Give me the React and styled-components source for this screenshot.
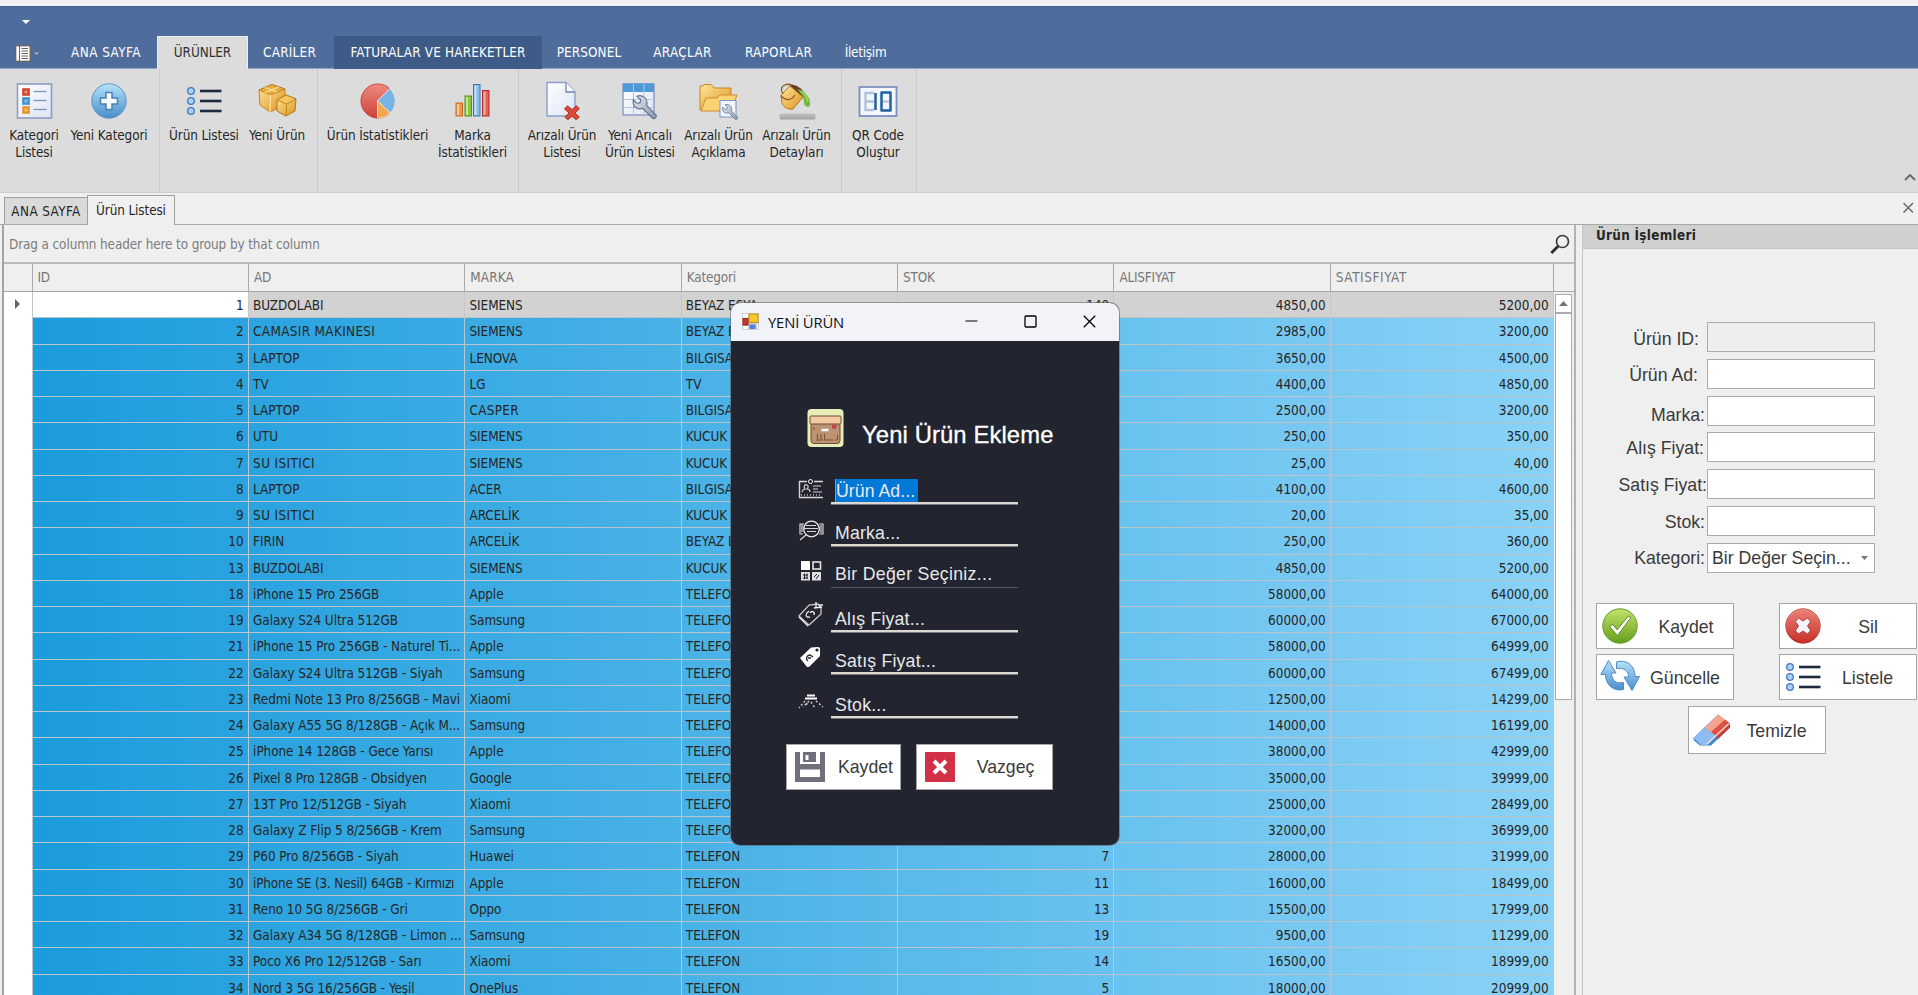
import React from "react";
import styled, { createGlobalStyle, css } from "styled-components";

const GlobalStyle = createGlobalStyle`
  * { box-sizing: border-box; }
  html, body { margin: 0; padding: 0; }
  body {
    width: 1918px;
    height: 995px;
    overflow: hidden;
    background: #efefef;
    color: #262626;
    font-family: "DejaVu Sans Condensed", "DejaVu Sans", sans-serif;
    font-stretch: condensed;
    font-size: 13.4px;
    letter-spacing: -0.1px;
  }
`;

const uiFont = css`
  font-family: "Liberation Sans", Arial, sans-serif;
  font-stretch: normal;
  font-size: 17.7px;
  letter-spacing: 0;
`;

const Screen = styled.div`
  position: relative;
  width: 1918px;
  height: 995px;
  overflow: hidden;
  display: flex;
  flex-direction: column;
`;

/* ---------- header and ribbon ---------- */
const TopStrip = styled.div`
  flex: none;
  height: 6px;
  background: #f2f2f2;
`;
const TitleBar = styled.header`
  flex: none;
  height: 30px;
  padding: 13px 0 0 22px;
  background: #4f6d9c;
  border-top: 1px solid #44628f;
  svg { display: block; }
`;
const RibbonTabs = styled.nav`
  flex: none;
  height: 33px;
  display: flex;
  background: #4f6d9c;
  border-bottom: 1px solid #93a5c3;
`;
const AppMenu = styled.div`
  width: 55px;
  padding: 9px 0 0 15px;
`;
const RibbonTab = styled.div`
  width: ${(p) => p.$w}px;
  height: 33px;
  margin-left: ${(p) => p.$ml || 0}px;
  line-height: ${(p) => (p.$active ? 32 : 34)}px;
  text-align: center;
  white-space: nowrap;
  letter-spacing: ${(p) => p.$ls ?? -0.1}px;
  color: ${(p) => (p.$active ? "#303030" : "#fff")};
  background: ${(p) => (p.$active ? "#dcdcdc" : p.$hover ? "#3e5a86" : "transparent")};
  border: ${(p) => (p.$active ? "1px solid #eee" : "0")};
  border-bottom: 0;
`;
const Ribbon = styled.div`
  flex: none;
  height: 124px;
  display: flex;
  background: #dcdcdc;
  border-bottom: 1px solid #cfcfcf;
`;
const RibbonGroup = styled.div`
  display: flex;
  width: ${(p) => p.$w}px;
  padding-left: ${(p) => p.$pl || 0}px;
  border-right: 1px solid #c9c9c9;
`;
const RibbonItem = styled.div`
  width: ${(p) => p.$w}px;
  display: flex;
  flex-direction: column;
  align-items: center;
  padding-top: 12px;
  line-height: 16.5px;
  text-align: center;
  white-space: pre;
  svg { display: block; margin-bottom: 7px; }
`;
const RibbonEnd = styled.div`
  flex: 1;
  display: flex;
  justify-content: flex-end;
  align-items: flex-end;
  padding: 0 2px 10px 0;
`;

/* ---------- document tabs ---------- */
const DocTabs = styled.div`
  flex: none;
  height: 32px;
  display: flex;
  align-items: flex-end;
  padding-left: 4px;
  background: #f0f0f0;
  border-bottom: 1px solid #a9a9a9;
`;
const DocTab = styled.div`
  width: ${(p) => p.$w}px;
  height: ${(p) => (p.$active ? 30 : 27)}px;
  margin-bottom: ${(p) => (p.$active ? -1 : 0)}px;
  line-height: ${(p) => (p.$active ? 29 : 28)}px;
  text-align: center;
  white-space: nowrap;
  letter-spacing: ${(p) => p.$ls ?? -0.1}px;
  background: ${(p) => (p.$active ? "#f0f0f0" : "#dadada")};
  border: 1px solid #a0a0a0;
  border-bottom: 0;
  border-right-width: ${(p) => (p.$active ? 1 : 0)}px;
`;
const CloseSlot = styled.div`
  margin-left: auto;
  padding: 0 3px 4px 0;
`;

/* ---------- grid ---------- */
const Main = styled.main`
  flex: 1;
  min-height: 0;
  display: flex;
  padding-left: 2px;
`;
const GridPanel = styled.section`
  width: 1574px;
  border-left: 2px solid #a3a3a3;
  border-right: 2px solid #b2b2b2;
  display: flex;
  flex-direction: column;
  overflow: hidden;
`;
const GroupPanel = styled.div`
  flex: none;
  height: 39px;
  display: flex;
  justify-content: space-between;
  align-items: center;
  padding: 1px 4px 0 5px;
  color: #7c7c7c;
  letter-spacing: -0.1px;
  border-bottom: 2px solid #bababa;
`;
const HeaderRow = styled.div`
  flex: none;
  height: 28px;
  display: grid;
  grid-template-columns: 28.5px repeat(6, 216.4px) 223px 1fr;
  border-bottom: 1px solid #a6a6a6;
  color: #777;
`;
const HeaderCell = styled.div`
  padding-left: 5px;
  line-height: 27px;
  border-right: 1px solid #a9a9a9;
  letter-spacing: ${(p) => p.$ls ?? -0.2}px;
  &:last-child { border-right: 0; }
`;
const GridBody = styled.div`
  flex: 1;
  min-height: 0;
  display: flex;
`;
const Rows = styled.div`
  width: 1550px;
`;
const Row = styled.div`
  height: 26.25px;
  display: flex;
`;
const Indicator = styled.div`
  width: 28.5px;
  padding: 7px 0 0 11px;
  background: #fff;
  border-right: 1px solid #bcc6cc;
  svg { display: block; }
`;
const Cells = styled.div`
  display: grid;
  grid-template-columns: repeat(6, 216.4px) 223px;
  border-bottom: 1px solid #bcc4ca;
  background: ${(p) =>
    p.$focused ? "#d2d2d2" : "linear-gradient(90deg, #1b9cdc 0%, #50b5e8 50%, #8ad2f7 100%)"};
`;
const Cell = styled.div`
  padding: 0 4.2px 0 4.2px;
  line-height: 27.4px;
  overflow: hidden;
  white-space: nowrap;
  text-align: ${(p) => (p.$num ? "right" : "left")};
  letter-spacing: ${(p) => p.$ls}px;
  background: ${(p) => (p.$white ? "#fff" : "transparent")};
  border-right: 1px solid ${(p) => (p.$focused ? "#c8c8c8" : "#b4c8d4")};
`;
const ScrollTrack = styled.div`
  width: 20px;
  padding: 2px 2px 0 1px;
`;
const ScrollUp = styled.div`
  height: 19px;
  display: flex;
  justify-content: center;
  align-items: center;
  background: #fff;
  border: 1px solid #ababab;
`;
const ScrollThumb = styled.div`
  height: 387px;
  margin-top: 0;
  background: #fff;
  border: 1px solid #ababab;
`;

/* ---------- side panel ---------- */
const SidePanel = styled.aside`
  flex: 1;
  margin-left: 6px;
  border-left: 1px solid #c4c4c4;
  display: flex;
  flex-direction: column;
`;
const SideTitle = styled.div`
  height: 24px;
  padding-left: 13px;
  line-height: 21px;
  font-weight: bold;
  letter-spacing: 0.3px;
  background: #d0d0d0;
  border-bottom: 1px solid #c6c6c6;
`;
const Form = styled.div`
  padding-top: 73px;
  ${uiFont}
  color: #3a3a3a;
`;
const FormRow = styled.div`
  display: flex;
  height: 36.75px;
`;
const FormLabel = styled.label`
  width: 124px;
  padding-right: ${(p) => p.$pr}px;
  padding-top: ${(p) => p.$pt}px;
  line-height: 20px;
  text-align: right;
  white-space: nowrap;
`;
const FormBox = styled.div`
  width: 168px;
  height: 30px;
  display: flex;
  justify-content: space-between;
  align-items: center;
  padding: 2px 5px 0 4px;
  white-space: nowrap;
  background: ${(p) => (p.$disabled ? "#eee" : "#fff")};
  border: 1px solid #acacac;
`;
const ButtonGrid = styled.div`
  display: grid;
  grid-template-columns: 138px 138px;
  column-gap: 44.5px;
  row-gap: 5px;
  padding: 24px 0 0 13px;
`;
const LastButton = styled.div`
  padding: 6px 0 0 105px;
`;
const ActionButton = styled.div`
  ${uiFont}
  color: #3a3a3a;
  width: ${(p) => p.$w || 138}px;
  height: ${(p) => p.$h || 46}px;
  display: flex;
  align-items: center;
  background: #fff;
  border: 1px solid #a4a4a4;
  padding-left: ${(p) => p.$pl}px;
  svg { flex: none; display: block; }
  span { flex: 1; text-align: center; padding-left: ${(p) => p.$tl || 0}px; padding-right: ${(p) => p.$tr || 0}px; padding-top: 2px; }
`;

/* ---------- dialog ---------- */
const Dialog = styled.div`
  position: absolute;
  left: 731px;
  top: 303px;
  width: 388px;
  height: 542px;
  border-radius: 9px;
  overflow: hidden;
  background: #222430;
  box-shadow: 0 0 0 1px rgba(90, 90, 100, 0.55);
  color: #e8e8ea;
  ${uiFont}
`;
const DialogBar = styled.div`
  height: 38px;
  display: flex;
  align-items: center;
  padding: 0 0 1px 11px;
  background: #f2f3f8;
  color: #111;
  font-family: "Open Sans", "Noto Sans", sans-serif;
  font-size: 14.8px;
  letter-spacing: -0.15px;
  svg { display: block; }
`;
const DialogName = styled.div`
  flex: 1;
  padding-left: 9px;
`;
const WindowButtons = styled.div`
  display: flex;
  gap: 46px;
  padding-right: 23px;
`;
const DialogHead = styled.div`
  display: flex;
  padding: 68px 0 0 76px;
  svg { display: block; }
`;
const DialogTitle = styled.div`
  padding: 12px 0 0 18px;
  line-height: 28px;
  font-size: 23.8px;
  letter-spacing: 0.12px;
  color: #fff;
  white-space: nowrap;
  -webkit-text-stroke: 0.3px #fff;
`;
const Field = styled.div`
  display: flex;
  align-items: flex-end;
  height: ${(p) => p.$h}px;
  padding-left: 66px;
`;
const FieldIcon = styled.div`
  width: 34px;
  padding-bottom: ${(p) => p.$pb}px;
  svg { display: block; }
`;
const FieldInput = styled.div`
  width: 187px;
  padding-left: 4px;
  padding-bottom: ${(p) => p.$pb || 0}px;
  line-height: ${(p) => p.$lh}px;
  letter-spacing: ${(p) => p.$ls ?? 0.2}px;
  white-space: nowrap;
  border-bottom: ${(p) => (p.$thin ? "1px solid #55565c" : "2px solid #dcd8d4")};
  box-shadow: ${(p) => (p.$thin ? "none" : "0 1px 0 #77787c")};
`;
const Selected = styled.span`
  display: block;
  width: 82.5px;
  padding-top: 1px;
  background: #0078d7;
  border-left: 1px solid #e08040;
`;
const DialogButtons = styled.div`
  display: flex;
  gap: 15px;
  padding: 26px 0 0 55px;
`;

/* ---------- icons ---------- */
const Gradients = () => (
  <svg width="0" height="0" style={{ display: "block" }}>
    <defs>
      <linearGradient id="blue" x1="0" y1="0" x2="0" y2="1">
        <stop offset="0" stopColor="#b4e2fa" /><stop offset="1" stopColor="#4a8ecb" />
      </linearGradient>
      <linearGradient id="red" x1="0" y1="0" x2="0" y2="1">
        <stop offset="0" stopColor="#f4a79e" /><stop offset="1" stopColor="#b91f1c" />
      </linearGradient>
      <linearGradient id="green" x1="0" y1="0" x2="0" y2="1">
        <stop offset="0" stopColor="#c2e36a" /><stop offset="1" stopColor="#659e1c" />
      </linearGradient>
      <linearGradient id="gold" x1="0" y1="0" x2="1" y2="1">
        <stop offset="0" stopColor="#ffe79a" /><stop offset="1" stopColor="#dd921f" />
      </linearGradient>
      <linearGradient id="paper" x1="0" y1="0" x2="1" y2="1">
        <stop offset="0" stopColor="#ffffff" /><stop offset="1" stopColor="#dce4f3" />
      </linearGradient>
      <linearGradient id="steel" x1="0" y1="0" x2="1" y2="1">
        <stop offset="0" stopColor="#e5ebf3" /><stop offset="1" stopColor="#8697b0" />
      </linearGradient>
      <linearGradient id="shade" x1="0" y1="0" x2="0" y2="1">
        <stop offset="0" stopColor="#c2c2c2" /><stop offset="1" stopColor="#a2a2a2" />
      </linearGradient>
    </defs>
  </svg>
);
const Svg = ({ w = 40, h = 40, children }) => (
  <svg width={w} height={h} viewBox={`0 0 ${w} ${h}`} fill="none">{children}</svg>
);
const Wrench = ({ t }) => (
  <path
    transform={t}
    d="M3 1.2 6.800 4.600 5.800 8 2.200 7.800-.6 4.600C-1.400 9-.2 12.400 4 13.600c1.700.4 3.300.2 4.600-.3L18.400 23c1.600 1.500 4.800-.6 3.600-3L12.600 10.400c1-4-.6-7.600-3.600-8.900C7.200.6 5 .4 3 1.200Z"
    fill="url(#steel)" stroke="#66758f" strokeWidth="1.2"
  />
);
const CategoryIcon = () => (
  <Svg>
    <rect x="3.500" y="3" width="34" height="34" fill="url(#paper)" stroke="#8e9cc5" strokeWidth="1.600" />
    {[["#d4422f", 7.5], ["#3f8ed0", 16.5], ["#e8902c", 25.5]].map(([c, y]) => (
      <g key={y}>
        <rect x="8.500" y={y} width="7" height="7" fill={c} stroke={c} strokeOpacity=".6" />
        <rect x="10.500" y={y + 2} width="3" height="3" fill="#fff" fillOpacity=".4" />
        <path d={`M19.500 ${y + 3}h13`} stroke="#7b92c0" strokeWidth="1.300" />
      </g>
    ))}
  </Svg>
);
const AddIcon = () => (
  <Svg>
    <circle cx="20" cy="20" r="17.200" fill="url(#blue)" stroke="#5f93c8" />
    <path d="M17 11.500h6V17h5.500v6H23v5.500h-6V23h-5.500v-6H17Z" fill="#f4f9ff" stroke="#4b80b8" strokeWidth="1.500" />
  </Svg>
);
const ListIcon = () => (
  <Svg>
    {[10, 20, 30].map((y) => (
      <g key={y}>
        <circle cx="7" cy={y} r="3.300" fill="#a5d2f5" stroke="#4377bf" strokeWidth="1.300" />
        <path d={`M16 ${y}h21.500`} stroke="#1d2b3f" strokeWidth="2.600" />
      </g>
    ))}
  </Svg>
);
const BoxesIcon = () => (
  <Svg>
    <path d="M2 9 15 3.500 28 8v9l-2 8-13 6L3 24Z" fill="url(#gold)" stroke="#c18426" />
    <path d="M2 9l11.500 5L28 8 15 3.500Z" fill="#e8ab42" stroke="#b1761c" strokeWidth=".8" />
    <path d="M13.500 14 13 31M8 6.500 20 11M22 6 8 11.500" stroke="#fbe6a0" strokeWidth="1.200" />
    <path d="M20 19l9-5 10 4-1 12-9 5-9-5Z" fill="url(#gold)" stroke="#b1761c" />
    <path d="M20 19l9-5 10 4-9.500 5Z" fill="#f6c65c" stroke="#b1761c" strokeWidth=".8" />
    <path d="M29.500 23 29 35" stroke="#c1841f" />
  </Svg>
);
const PieIcon = () => (
  <Svg>
    <circle cx="20" cy="20" r="17.200" fill="url(#red)" />
    <circle cx="20" cy="20" r="17" fill="#e66a5b" fillOpacity=".45" stroke="#c94b42" />
    <path d="M19.500 20 32 7.500A17.500 17.500 0 0 1 32.500 32Z" fill="#79b3e3" stroke="#e6eff7" />
    <path d="M19.500 20 32 32a17 17 0 0 1-12.500 5Z" fill="#f1a64f" stroke="#f8d8ac" />
  </Svg>
);
const BarsIcon = () => (
  <Svg>
    {[[3, 22, "#ec9a4c", "#c5661c"], [12, 15, "#8cc63f", "#55911a"], [20.5, 3.5, "#87bde9", "#3c76b5"], [29.5, 9.5, "#e36257", "#b12a25"]].map(([x, y, f, s]) => (
      <g key={x}>
        <rect x={x} y={y} width="6.500" height={35 - y} fill={f} stroke={s} />
        <rect x={x + 1} y={y + 1} width="2" height={33 - y} fill="#fff" fillOpacity=".5" />
      </g>
    ))}
  </Svg>
);
const FileDeleteIcon = () => (
  <Svg>
    <path d="M5 1.500h19l9 9.500V35H5Z" fill="url(#paper)" stroke="#8a9fc9" strokeWidth="1.400" />
    <path d="M24 1.500V11h9" fill="#fff" stroke="#6d84b3" strokeWidth="1.300" />
    <path d="m22.500 28 3-3.200 4.500 3.700 4.500-3.700 2.800 3L33 32l4.300 4-3 2.800-4.500-3.600-4 3.600-3-2.800L27 32Z" fill="#dc4a3c" stroke="#b02c23" />
  </Svg>
);
const TableIcon = () => (
  <Svg>
    <rect x="3" y="3" width="31" height="31" fill="url(#paper)" stroke="#8698c4" strokeWidth="1.400" />
    <rect x="3" y="2.500" width="31" height="8.500" fill="#4d9ad6" />
    <path d="M13.500 3v31M24 3v31M3 18.500h31M3 26.500h31" stroke="#b8c5df" />
    <Wrench t="translate(14 14)" />
  </Svg>
);
const FolderIcon = () => (
  <Svg>
    <path d="M1 5h3l1-1.500h7L15 7h17v22H1Z" fill="url(#gold)" stroke="#c3842b" />
    <path d="M7 17h11l3-3h17l-6 16H2Z" fill="#fbd274" stroke="#cf8e2f" />
    <rect x="21" y="19.500" width="16" height="16.500" fill="#f0f4fb" stroke="#7d94c4" />
    <Wrench t="translate(24 23) scale(.66)" />
  </Svg>
);
const PaintIcon = () => (
  <Svg>
    <rect x="2.500" y="32.500" width="36" height="6" rx="1.500" fill="url(#shade)" />
    <path d="M4 14 13 5l13 11-10 12c-5 1-10-2-11-6Z" fill="url(#gold)" stroke="#b87820" />
    <path d="M6 13C0 4 12 0 19 7M4 15c5 5 10 5 14-1" stroke="#8d5a2a" strokeWidth="1.300" />
    <path d="M13 4.500c4-2 11 2 14 7l-1 4.500Z" fill="#6a3a22" />
    <path d="M20 8c8 1 14 9 13 17-3 2-6 0-6-4 0-5-3-8-7-13Z" fill="#6fb935" />
    <path d="M23 10c5 2 7 6 8 11" stroke="#a9db78" strokeWidth="1.300" />
  </Svg>
);
const DigitsIcon = () => (
  <Svg>
    <rect x="1.500" y="6" width="37" height="29" fill="#f3f6fc" stroke="#7b8fbf" strokeWidth="1.800" />
    <path d="M16 12H7.500v17H16M8.500 20.500H16" stroke="#b3c1de" strokeWidth="2.400" />
    <path d="M24 20.500h7" stroke="#b3c1de" strokeWidth="2.200" />
    <path d="M17.500 12v17M23.500 11.500H32.500v18h-9Z" stroke="#225f9e" strokeWidth="2.500" strokeLinejoin="round" />
  </Svg>
);
const AppMenuIcon = () => (
  <Svg w={26} h={18}>
    <rect x=".7" y=".7" width="14.500" height="15.600" fill="#fff" stroke="#66615c" strokeWidth="1.300" />
    <path d="M4.500 1v15" stroke="#66615c" />
    <path d="M6.500 3.500h6.500M6.500 6h6.500M6.500 8.500h6.500M6.500 11h6.500M6.500 13.500h6.500" stroke="#66615c" />
    <path d="M19 7.500h5l-2.500 2.500Z" fill="#b9b3aa" />
  </Svg>
);
const SaveOkIcon = () => (
  <Svg>
    <circle cx="20" cy="20" r="17.200" fill="url(#green)" stroke="#659b2a" />
    <path d="m9.500 20.500 3.300-2 4.200 5.300L28.500 10l2.500 1.500L17.500 29.500Z" fill="#fff" stroke="#5a8c1e" />
  </Svg>
);
const DeleteIcon = () => (
  <Svg>
    <circle cx="20" cy="20" r="17.200" fill="url(#red)" stroke="#c04840" />
    <circle cx="20" cy="20" r="16" fill="#dc4a3c" fillOpacity=".4" />
    <path d="m12.500 15.500 3-3.500 4.500 3 4.500-3 3 3.500-3 4.500 3 4.500-3 3.500-4.500-3-4.500 3-3-3.500 3-4.500Z" fill="#f4f4fa" stroke="#b13028" strokeWidth=".8" />
  </Svg>
);
const RefreshIcon = () => (
  <Svg>
    <path d="M8.500 3.500 16 16h-4.500c0 8 5 11 12 9.500v7C14 35 5.500 28 5.500 17.500H.8Z" fill="url(#blue)" stroke="#4f8cc8" />
    <path d="M32 33.500 24 20h4.500c0-6-4-9.500-12-8.500V5C26 2 35 8 35 19.500h4.500Z" fill="url(#blue)" stroke="#4f8cc8" />
  </Svg>
);
const EraserIcon = () => (
  <Svg>
    <path d="M1.500 28 26 4.500l12 9v4L19 35.500H8l-6-5Z" fill="#3f84cf" />
    <path d="M1.500 28 12.500 18l12 8-9 9H9Z" fill="#8dbdf0" />
    <path d="M12.500 18 26 4.500l12 9L24.500 26Z" fill="#f3a58e" />
    <path d="m24.500 26 13.500-12.500v4L25.500 29.500Z" fill="#cf3b2c" />
    <path d="M19 22 33 9.500l5 4L24.500 26Z" fill="#dd5242" />
    <path d="M15 34 37 13.500" stroke="#f4dbd6" strokeWidth="1.400" />
  </Svg>
);
const SearchIcon = () => (
  <Svg w={20} h={20}>
    <circle cx="12.500" cy="7.500" r="6" stroke="#3c3c3c" strokeWidth="1.700" />
    <path d="m8.300 12-7 7" stroke="#2c2c2c" strokeWidth="2.800" />
  </Svg>
);
const FormIcon = () => (
  <Svg w={17} h={17}>
    <rect width="17" height="17" fill="#cdcdcd" />
    <path d="M1 1h5v4H1zM1 13h5v3H1zM15 11h1v5h-1z" fill="#fff" />
    <rect x="7" y="1" width="9" height="8.500" fill="#f6c72c" stroke="#c79312" />
    <rect x="1" y="5.500" width="5" height="6.500" fill="#c63a2e" stroke="#99221a" />
    <rect x="7.500" y="11.500" width="6" height="4.500" fill="#4f82e2" />
  </Svg>
);
const ParcelIcon = () => (
  <Svg w={37} h={38}>
    <rect x=".5" width="36" height="38" rx="4" fill="#e6eeb5" />
    <rect x="4" y="12" width="29" height="22.500" rx="3" fill="#bd9270" stroke="#6f4d39" />
    <rect x="3" y="7" width="31" height="8" rx="1" fill="#f4cba1" stroke="#6f4d39" />
    <path d="M14.500 21h7" stroke="#fff" strokeWidth="2.400" />
    <path d="M25 16h4.500v3.500H25Z" fill="#c43b4c" />
    <path d="M10.500 25v5M14 25v5M9 31h7" stroke="#6f4d39" strokeWidth="1.100" />
    <path d="M17.500 24.500v6.500H26M30.500 26v5h-2.500M7 18v3" stroke="#6f4d39" strokeWidth=".9" />
  </Svg>
);
const BadgeIcon = () => (
  <Svg w={28} h={20}>
    <path d="M10 2.500H2.500v16H26M17 2.500h9" stroke="#d8d8da" strokeWidth="1.400" />
    <circle cx="13.500" cy="2.500" r="2" stroke="#fff" />
    <path d="M5 13c1-3 2-3 3-3-2-3 0-5 2-4s1 3 0 4c2 0 3 1 3 3M16 7h8M16 10h5M16 13h9" stroke="#d0d0d4" strokeWidth="1.200" />
    <path d="M4 16h21" stroke="#fff" strokeDasharray="1 2" />
  </Svg>
);
const BrandIcon = () => (
  <Svg w={28} h={22}>
    <circle cx="14.500" cy="10" r="7.800" stroke="#ededf0" strokeWidth="1.300" />
    <path d="M7 5H3v10h3M22 5h4v10h-4M9 6.500h10M7 9.500h14M10 12.500h9M9 16l-6 5M5 5v8M24 6v8" stroke="#d6d6d9" strokeWidth="1.200" />
  </Svg>
);
const TilesIcon = () => (
  <Svg w={26} h={21}>
    <path d="M4 1h9v9H4z" fill="#fff" />
    <rect x="16" y="2" width="7.500" height="7" stroke="#e4e4e4" strokeWidth="1.600" />
    <path d="M4 12h9v8.500H4zM15 12h9v8.500h-9z" fill="#dedede" />
    <path d="M6 15h5M6 18h5M7.500 13.500v5.500M10 13.500v5.500M17 17l3-3M19 19l3-4" stroke="#222430" />
  </Svg>
);
const TagLineIcon = () => (
  <Svg w={27} h={25}>
    <path d="m2 14 10-11 9-1 3 4v6L12 23Z" stroke="#c5c5c9" strokeWidth="1.300" />
    <path d="m2 15 9 9M12 9c-4 3-4 7 1 6M13 11c2-3 5-1 4 2M19 0v5M22 3h4M17 6l8-1" stroke="#f1f1f1" strokeWidth="1.300" />
  </Svg>
);
const TagSolidIcon = () => (
  <Svg w={26} h={22}>
    <path d="M3 12 14 1.500 21 1q2 0 2 2v7L12 21h-2Z" fill="#fff" />
    <circle cx="20" cy="4" r="1.600" fill="#222430" />
    <path d="M11 15c-3-2-1-6 2-6l3 2M11 12h3" stroke="#222430" strokeWidth="1.300" />
  </Svg>
);
const StockIcon = () => (
  <Svg w={28} h={15}>
    <path d="M10 1.500h8M8 4.500h12" stroke="#fff" strokeWidth="1.800" />
    <path d="m8 7-6 7M12 7l-6 6M14 8l4 6M19 7l7 6M10 9l-1 4" stroke="#c9c9cd" strokeWidth="1.400" strokeDasharray="2 2" />
  </Svg>
);
const DiskIcon = () => (
  <Svg w={30} h={30}>
    <path d="M0 0h5v12h20V0h5v30H0Z" fill="#6f707b" />
    <path d="M8 0h13v10H8Z" fill="#6f707b" />
    <path d="M10.500 3h3v5h-3zM5 17.500h20V25H5z" fill="#fff" />
  </Svg>
);
const CancelIcon = () => (
  <Svg w={30} h={30}>
    <rect width="30" height="30" rx="1" fill="#d13046" />
    <path d="m9 9 12 12M21 9 9 21" stroke="#fff" strokeWidth="4" />
  </Svg>
);

/* ---------- data ---------- */
const tabs = [
  { t: "ANA SAYFA", w: 102, ls: 0.45 },
  { t: "ÜRÜNLER", w: 91, ls: -0.05, active: true },
  { t: "CARİLER", w: 83, ls: 0.25 },
  { t: "FATURALAR VE HAREKETLER", w: 208, ml: 3, ls: 0.18, hover: true },
  { t: "PERSONEL", w: 94, ls: 0.1 },
  { t: "ARAÇLAR", w: 93, ls: 0.35 },
  { t: "RAPORLAR", w: 99, ls: 0.3 },
  { t: "İletişim", w: 75, ls: -0.25 },
];
const groups = [
  { w: 160, pl: 4, items: [["Kategori\nListesi", 60, CategoryIcon], ["Yeni Kategori", 90, AddIcon]] },
  { w: 158, items: [["Ürün Listesi", 88, ListIcon], ["Yeni Ürün", 58, BoxesIcon]] },
  { w: 201, items: [["Ürün İstatistikleri", 119, PieIcon], ["Marka\nİstatistikleri", 71, BarsIcon]] },
  {
    w: 323, pl: 4,
    items: [
      ["Arızalı Ürün\nListesi", 78, FileDeleteIcon],
      ["Yeni Arıcalı\nÜrün Listesi", 78, TableIcon],
      ["Arızalı Ürün\nAçıklama", 79, FolderIcon],
      ["Arızalı Ürün\nDetayları", 77, PaintIcon],
    ],
  },
  { w: 75, items: [["QR Code\nOluştur", 72, DigitsIcon]] },
];
const headers = [
  { t: "" },
  { t: "ID" },
  { t: "AD" },
  { t: "MARKA", ls: 0.15 },
  { t: "Kategori", ls: -0.15 },
  { t: "STOK" },
  { t: "ALISFIYAT" },
  { t: "SATISFIYAT", ls: 0.6 },
  { t: "" },
];
const rows = [
  ["1", "BUZDOLABI", "SIEMENS", "BEYAZ ESYA", "140", "4850,00", "5200,00"],
  ["2", "CAMASIR MAKINESI", "SIEMENS", "BEYAZ ESYA", "", "2985,00", "3200,00"],
  ["3", "LAPTOP", "LENOVA", "BILGISAYAR", "", "3650,00", "4500,00"],
  ["4", "TV", "LG", "TV", "", "4400,00", "4850,00"],
  ["5", "LAPTOP", "CASPER", "BILGISAYAR", "", "2500,00", "3200,00"],
  ["6", "UTU", "SIEMENS", "KUCUK EV", "", "250,00", "350,00"],
  ["7", "SU ISITICI", "SIEMENS", "KUCUK EV", "", "25,00", "40,00"],
  ["8", "LAPTOP", "ACER", "BILGISAYAR", "", "4100,00", "4600,00"],
  ["9", "SU ISITICI", "ARCELİK", "KUCUK EV", "", "20,00", "35,00"],
  ["10", "FIRIN", "ARCELİK", "BEYAZ ESYA", "", "250,00", "360,00"],
  ["13", "BUZDOLABI", "SIEMENS", "KUCUK EV", "", "4850,00", "5200,00"],
  ["18", "iPhone 15 Pro 256GB", "Apple", "TELEFON", "", "58000,00", "64000,00"],
  ["19", "Galaxy S24 Ultra 512GB", "Samsung", "TELEFON", "", "60000,00", "67000,00"],
  ["21", "iPhone 15 Pro 256GB - Naturel Ti...", "Apple", "TELEFON", "", "58000,00", "64999,00"],
  ["22", "Galaxy S24 Ultra 512GB - Siyah", "Samsung", "TELEFON", "", "60000,00", "67499,00"],
  ["23", "Redmi Note 13 Pro 8/256GB - Mavi", "Xiaomi", "TELEFON", "", "12500,00", "14299,00"],
  ["24", "Galaxy A55 5G 8/128GB - Açık M...", "Samsung", "TELEFON", "", "14000,00", "16199,00"],
  ["25", "iPhone 14 128GB - Gece Yarısı", "Apple", "TELEFON", "", "38000,00", "42999,00"],
  ["26", "Pixel 8 Pro 128GB - Obsidyen", "Google", "TELEFON", "", "35000,00", "39999,00"],
  ["27", "13T Pro 12/512GB - Siyah", "Xiaomi", "TELEFON", "", "25000,00", "28499,00"],
  ["28", "Galaxy Z Flip 5 8/256GB - Krem", "Samsung", "TELEFON", "", "32000,00", "36999,00"],
  ["29", "P60 Pro 8/256GB - Siyah", "Huawei", "TELEFON", "7", "28000,00", "31999,00"],
  ["30", "iPhone SE (3. Nesil) 64GB - Kırmızı", "Apple", "TELEFON", "11", "16000,00", "18499,00"],
  ["31", "Reno 10 5G 8/256GB - Gri", "Oppo", "TELEFON", "13", "15500,00", "17999,00"],
  ["32", "Galaxy A34 5G 8/128GB - Limon ...", "Samsung", "TELEFON", "19", "9500,00", "11299,00"],
  ["33", "Poco X6 Pro 12/512GB - Sarı", "Xiaomi", "TELEFON", "14", "16500,00", "18999,00"],
  ["34", "Nord 3 5G 16/256GB - Yeşil", "OnePlus", "TELEFON", "5", "18000,00", "20999,00"],
];
const numeric = [0, 4, 5, 6];
const spacing = { "CAMASIR MAKINESI": 0.35, "SU ISITICI": 0.4, CASPER: 0.3, "iPhone SE (3. Nesil) 64GB - Kırmızı": -0.17 };
const cellSpacing = (text, col) => spacing[text] ?? (numeric.includes(col) ? 0.02 : -0.05);
const formRows = [
  { t: "Ürün ID:", pr: 8, pt: 7, disabled: true },
  { t: "Ürün Ad:", pr: 9, pt: 6 },
  { t: "Marka:", pr: 2, pt: 9 },
  { t: "Alış Fiyat:", pr: 3, pt: 6 },
  { t: "Satış Fiyat:", pr: 0, pt: 6 },
  { t: "Stok:", pr: 2, pt: 6 },
  { t: "Kategori:", pr: 2, pt: 5, select: "Bir Değer Seçin..." },
];
const fields = [
  { t: "Ürün Ad...", h: 54.5, icon: BadgeIcon, ipb: 5, lh: 22, ls: 0.05, selected: true },
  { t: "Marka...", h: 42.5, icon: BrandIcon, ipb: 5, lh: 22 },
  { t: "Bir Değer Seçiniz...", h: 42, icon: TilesIcon, ipb: 7, lh: 23, pb: 1, ls: 0.3, thin: true },
  { t: "Alış Fiyat...", h: 44, icon: TagLineIcon, ipb: 5, lh: 22 },
  { t: "Satış Fiyat...", h: 42, icon: TagSolidIcon, ipb: 6, lh: 21 },
  { t: "Stok...", h: 43.5, icon: StockIcon, ipb: 9, lh: 21 },
];

export default function App() {
  return (
    <Screen>
      <GlobalStyle />
      <Gradients />
      <TopStrip />
      <TitleBar>
        <Svg w={8} h={5}><path d="M0 0h8L4 4Z" fill="#fff" /></Svg>
      </TitleBar>
      <RibbonTabs>
        <AppMenu><AppMenuIcon /></AppMenu>
        {tabs.map((x) => (
          <RibbonTab key={x.t} $w={x.w} $ml={x.ml} $ls={x.ls} $active={x.active} $hover={x.hover}>{x.t}</RibbonTab>
        ))}
      </RibbonTabs>
      <Ribbon>
        {groups.map((g, i) => (
          <RibbonGroup key={i} $w={g.w} $pl={g.pl}>
            {g.items.map(([label, w, Icon]) => (
              <RibbonItem key={label} $w={w}><Icon />{label}</RibbonItem>
            ))}
          </RibbonGroup>
        ))}
        <RibbonEnd>
          <Svg w={12} h={9}><path d="m1 7 5-5 5 5" stroke="#666" strokeWidth="1.800" /></Svg>
        </RibbonEnd>
      </Ribbon>
      <DocTabs>
        <DocTab $w={83} $ls={0.4}>ANA SAYFA</DocTab>
        <DocTab $w={88} $active>Ürün Listesi</DocTab>
        <CloseSlot>
          <Svg w={13} h={20}><path d="m1.500 6 9.500 9.500M11 6l-9.500 9.500" stroke="#707070" strokeWidth="1.600" /></Svg>
        </CloseSlot>
      </DocTabs>
      <Main>
        <GridPanel>
          <GroupPanel>
            <span>Drag a column header here to group by that column</span>
            <SearchIcon />
          </GroupPanel>
          <HeaderRow>
            {headers.map((h, i) => <HeaderCell key={i} $ls={h.ls}>{h.t}</HeaderCell>)}
          </HeaderRow>
          <GridBody>
            <Rows>
              {rows.map((r, ri) => (
                <Row key={r[0]}>
                  <Indicator>
                    {ri === 0 && <Svg w={6} h={10}><path d="M0 0l5 5-5 5Z" fill="#666" /></Svg>}
                  </Indicator>
                  <Cells $focused={ri === 0}>
                    {r.map((c, ci) => (
                      <Cell
                        key={ci}
                        $num={numeric.includes(ci)}
                        $ls={cellSpacing(c, ci)}
                        $focused={ri === 0}
                        $white={ri === 0 && ci === 0}
                      >
                        {c}
                      </Cell>
                    ))}
                  </Cells>
                </Row>
              ))}
            </Rows>
            <ScrollTrack>
              <ScrollUp><Svg w={9} h={5}><path d="M4.500 0 9 5H0Z" fill="#777" /></Svg></ScrollUp>
              <ScrollThumb />
            </ScrollTrack>
          </GridBody>
        </GridPanel>
        <SidePanel>
          <SideTitle>Ürün İşlemleri</SideTitle>
          <Form>
            {formRows.map((f) => (
              <FormRow key={f.t}>
                <FormLabel $pr={f.pr} $pt={f.pt}>{f.t}</FormLabel>
                <FormBox $disabled={f.disabled}>
                  {f.select}
                  {f.select && <Svg w={8} h={5}><path d="M0 0h7L3.500 4Z" fill="#777" /></Svg>}
                </FormBox>
              </FormRow>
            ))}
          </Form>
          <ButtonGrid>
            <ActionButton $pl={3} $tr={1}><SaveOkIcon /><span>Kaydet</span></ActionButton>
            <ActionButton $pl={3} $tr={2}><DeleteIcon /><span>Sil</span></ActionButton>
            <ActionButton $pl={3} $tr={3}><RefreshIcon /><span>Güncelle</span></ActionButton>
            <ActionButton $pl={3} $tr={3}><ListIcon /><span>Listele</span></ActionButton>
          </ButtonGrid>
          <LastButton>
            <ActionButton $h={48} $pl={3} $tr={4}><EraserIcon /><span>Temizle</span></ActionButton>
          </LastButton>
        </SidePanel>
      </Main>
      <Dialog>
        <DialogBar>
          <FormIcon />
          <DialogName>YENİ ÜRÜN</DialogName>
          <WindowButtons>
            <Svg w={13} h={13}><path d="M.5 6h12" stroke="#000" strokeWidth="1.200" /></Svg>
            <Svg w={13} h={13}><rect x="1" y="1" width="11" height="11" rx="1" stroke="#000" strokeWidth="1.300" /></Svg>
            <Svg w={13} h={13}><path d="m.8.8 11.400 11.400M12.200.8.800 12.200" stroke="#000" strokeWidth="1.300" /></Svg>
          </WindowButtons>
        </DialogBar>
        <DialogHead>
          <ParcelIcon />
          <DialogTitle>Yeni Ürün Ekleme</DialogTitle>
        </DialogHead>
        {fields.map((f) => {
          const Icon = f.icon;
          return (
            <Field key={f.t} $h={f.h}>
              <FieldIcon $pb={f.ipb}><Icon /></FieldIcon>
              <FieldInput $pb={f.pb} $lh={f.lh} $ls={f.ls} $thin={f.thin}>
                {f.selected ? <Selected>{f.t}</Selected> : f.t}
              </FieldInput>
            </Field>
          );
        })}
        <DialogButtons>
          <ActionButton $w={115} $pl={8} $tl={6}><DiskIcon /><span>Kaydet</span></ActionButton>
          <ActionButton $w={137} $pl={8} $tl={4}><CancelIcon /><span>Vazgeç</span></ActionButton>
        </DialogButtons>
      </Dialog>
    </Screen>
  );
}
